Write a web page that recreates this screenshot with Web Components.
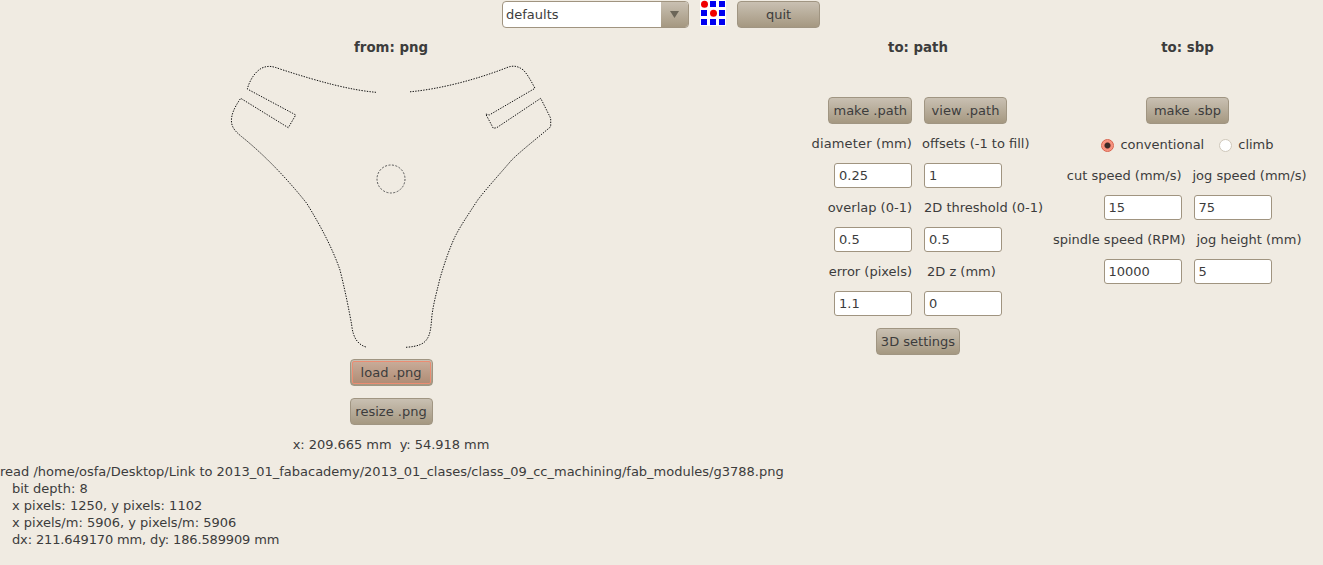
<!DOCTYPE html>
<html>
<head>
<meta charset="utf-8">
<title>fab modules</title>
<style>
html, body {
  margin: 0;
  padding: 0;
  height: 100%;
  overflow: hidden;
  background: #f0ebe2;
  color: #3c3c3c;
  font: 13px "DejaVu Sans", sans-serif;
}
</style>
</head>
<body>
<fab-app>
  <fab-toolbar slot="top">
    <fab-combo>defaults</fab-combo>
    <fab-logo></fab-logo>
    <fab-button>quit</fab-button>
  </fab-toolbar>

  <fab-panel slot="left" heading="from: png">
    <fab-outline></fab-outline>
    <fab-button focused style="margin-top:7px">load .png</fab-button>
    <fab-button style="margin-top:12px">resize .png</fab-button>
    <fab-label style="margin-top:9px;letter-spacing:-.05px">x: 209.665 mm&nbsp; y: 54.918 mm</fab-label>
  </fab-panel>

  <fab-panel slot="middle" heading="to: path">
    <fab-grid style="margin-top:40px">
      <fab-button>make .path</fab-button>
      <fab-button>view .path</fab-button>
      <fab-label style="letter-spacing:.15px">diameter (mm)</fab-label>
      <fab-label class="outset">offsets (-1 to fill)</fab-label>
      <fab-entry>0.25</fab-entry>
      <fab-entry>1</fab-entry>
      <fab-label>overlap (0-1)</fab-label>
      <fab-label>2D threshold (0-1)</fab-label>
      <fab-entry>0.5</fab-entry>
      <fab-entry>0.5</fab-entry>
      <fab-label>error (pixels)</fab-label>
      <fab-label class="inset">2D z (mm)</fab-label>
      <fab-entry>1.1</fab-entry>
      <fab-entry>0</fab-entry>
    </fab-grid>
    <fab-button style="margin-top:3px">3D settings</fab-button>
  </fab-panel>

  <fab-panel slot="right" heading="to: sbp" style="padding-left:13px">
    <fab-sbp-body>
      <fab-button>make .sbp</fab-button>
      <fab-radio-row>
        <fab-radio checked>conventional</fab-radio>
        <fab-radio>climb</fab-radio>
      </fab-radio-row>
      <fab-grid>
        <fab-label>cut speed (mm/s)</fab-label>
        <fab-label class="outset-s">jog speed (mm/s)</fab-label>
        <fab-entry>15</fab-entry>
        <fab-entry>75</fab-entry>
        <fab-label class="hang">spindle speed (RPM)</fab-label>
        <fab-label class="inset">jog height (mm)</fab-label>
        <fab-entry>10000</fab-entry>
        <fab-entry>5</fab-entry>
      </fab-grid>
    </fab-sbp-body>
  </fab-panel>

  <fab-log slot="log">
    <div>read /home/osfa/Desktop/Link to 2013_01_fabacademy/2013_01_clases/class_09_cc_machining/fab_modules/g3788.png</div>
    <div class="indent">bit depth: 8</div>
    <div class="indent">x pixels: 1250, y pixels: 1102</div>
    <div class="indent">x pixels/m: 5906, y pixels/m: 5906</div>
    <div class="indent" style="letter-spacing:-.14px">dx: 211.649170 mm, dy: 186.589909 mm</div>
  </fab-log>
</fab-app>

<script>
function define(name, css, html) {
  customElements.get(name) || customElements.define(name, class extends HTMLElement {
    constructor() {
      super();
      this.attachShadow({ mode: 'open' });
      this.shadowRoot.innerHTML = `<style>${css}</style>${html}`;
    }
  });
}

define('fab-app', `
  :host { display: block; }
  .cols {
    display: grid;
    grid-template-columns: 782px 248px 254px;
    column-gap: 12px;
    height: 426px;
    padding-top: 9px;
  }
`, `
  <slot name="top"></slot>
  <div class="cols">
    <slot name="left"></slot>
    <slot name="middle"></slot>
    <slot name="right"></slot>
  </div>
  <slot name="log"></slot>
`);

define('fab-toolbar', `
  :host {
    display: flex;
    justify-content: center;
    height: 28px;
    padding-right: 1px;
    gap: 11px;
  }
  ::slotted(fab-button) { margin: 1px 0 0 -1px; }
`, `<slot></slot>`);

define('fab-combo', `
  :host {
    display: flex;
    box-sizing: border-box;
    width: 187px;
    height: 27px;
    margin-top: 1px;
    border: 1px solid #a09480;
    border-radius: 4px;
    background: #fff;
    overflow: hidden;
  }
  .text { flex: 1; padding-left: 3px; line-height: 25px; }
  .arrow {
    width: 27px;
    display: flex;
    align-items: center;
    justify-content: center;
    background: linear-gradient(#c9c0b2, #a59881);
  }
`, `
  <div class="text"><slot></slot></div>
  <div class="arrow">
    <svg width="9" height="9" viewBox="0 0 9 9"><path d="M0 1h9L4.5 8z" fill="#6b6558"/></svg>
  </div>
`);

define('fab-logo', `
  :host { display: block; width: 27px; height: 27px; }
  svg { display: block; }
`, `
  <svg width="27" height="27" viewBox="0 0 27 27">
    <rect width="26" height="26" fill="#fff"/>
    <g fill="#0000f0">
      <rect x="10" y="1" width="6" height="6"/>
      <rect x="19" y="1" width="6" height="6"/>
      <rect x="1" y="10" width="6" height="6"/>
      <rect x="19" y="10" width="6" height="6"/>
      <rect x="1" y="19" width="6" height="6"/>
      <rect x="10" y="19" width="6" height="6"/>
      <rect x="19" y="19" width="6" height="6"/>
    </g>
    <g fill="#f00000">
      <circle cx="4.5" cy="4.2" r="3.5"/>
      <circle cx="13.5" cy="13.2" r="3.5"/>
    </g>
  </svg>
`);

define('fab-button', `
  :host {
    display: inline-flex;
    position: relative;
    isolation: isolate;
    box-sizing: border-box;
    align-items: center;
    justify-content: center;
    min-width: 83px;
    height: 27px;
    padding: 0 4px;
    border: 1px solid #a09582;
    border-radius: 4px;
    background: linear-gradient(#c9c0b2, #a59881);
    white-space: nowrap;
  }
  :host([focused])::after {
    content: "";
    position: absolute;
    inset: 1px;
    z-index: -1;
    border: 1px solid #ec8c72;
    border-radius: 2px;
    background: linear-gradient(#c8ab98, #b08d76);
  }
`, `<slot></slot>`);

define('fab-panel', `
  :host { display: block; }
  .body { display: flex; flex-direction: column; align-items: center; }
  h2 {
    margin: 0;
    height: 20px;
    font-size: 13.33px;
    font-weight: bold;
    line-height: 22px;
    text-align: center;
  }
`, `
  <h2></h2>
  <div class="body"><slot></slot></div>
`);
document.querySelectorAll('fab-panel').forEach(($el) => {
  $el.shadowRoot.querySelector('h2').textContent = $el.getAttribute('heading');
});

define('fab-label', `
  :host {
    display: block;
    height: 20px;
    line-height: 22px;
    white-space: nowrap;
  }
`, `<slot></slot>`);

define('fab-entry', `
  :host {
    display: block;
    box-sizing: border-box;
    width: 78px;
    height: 25px;
    padding-left: 4px;
    line-height: 23px;
    border: 1px solid #a09480;
    border-radius: 3px;
    background: #fff;
  }
`, `<slot></slot>`);

define('fab-grid', `
  :host {
    display: grid;
    grid-template-columns: 78px 78px;
    column-gap: 12px;
  }
  ::slotted(:nth-child(odd)) { justify-self: end; }
  ::slotted(:nth-child(even)) { justify-self: start; }
  ::slotted(fab-button) { margin-bottom: 9px; }
  ::slotted(fab-label) { margin-bottom: 10px; }
  ::slotted(fab-entry) { margin-bottom: 9px; }
  ::slotted(.inset) { padding-left: 3px; }
  ::slotted(.outset) { margin-left: -2px; }
  ::slotted(.outset-s) { margin-left: -1px; }
  ::slotted(.hang) { margin-right: -4px; }
`, `<slot></slot>`);

define('fab-sbp-body', `
  :host {
    display: flex;
    flex-direction: column;
    align-items: center;
    padding-top: 40px;
  }
`, `<slot></slot>`);

define('fab-radio-row', `
  :host {
    display: flex;
    gap: 15px;
    height: 20px;
    margin: 11px 0 10px;
  }
`, `<slot></slot>`);

define('fab-radio', `
  :host {
    display: inline-flex;
    align-items: center;
    gap: 6px;
    white-space: nowrap;
    line-height: 20px;
  }
  .dot {
    box-sizing: border-box;
    width: 13px;
    height: 13px;
    border-radius: 50%;
    border: 1px solid #cfc8bb;
    background: #fff;
  }
  :host([checked]) .dot {
    border-color: #d9604a;
    background: radial-gradient(circle, #3c2a26 0 2.5px, #f88a76 3.5px, #f5b0a0 100%);
  }
`, `<span class="dot"></span><slot></slot>`);

define('fab-outline', `
  :host { display: block; width: 322px; height: 290px; margin-top: 5px; }
  svg { display: block; }
  path, circle { fill: none; stroke: #111; stroke-width: 1; stroke-dasharray: 1.4 1.3; }
  circle { stroke: #555; stroke-dasharray: 2 1.5; }
`, `
  <svg width="322" height="290" viewBox="230 62 322 290">
    <path d="M376 92.3C350 90 320 82 280 69C272 66 268 65.5 262 68C256 71 250 79 247.3 89L292.7 113.3L295.7 115L288.3 127.7L286.7 126.7L240.7 98.3C234 108 231 115 231.5 122C232 128 236 132 241.7 136.7C262 153 285 176 306.7 203.3C322 228 333 250 340 270C345 290 349 310 351.7 325C353 338 358 345 367 347.3"/>
    <path d="M410 91.8C440 89 475 80 506.7 67.7C513 65 518 66 523.3 70C528 75 531 81 535 88.3L489.3 115L485.7 114L493.3 128.3L496.7 127.7L540.7 98.3L550.7 118.3L550.7 126.7C535 140 522 150 511.7 160C498 176 487 188 477.7 200C468 215 461 225 455 236.7C448 252 444 265 440 278.3C436 295 433 305 431.7 318C431 328 430 335 427 339C424 344 418 346.5 406 347.3"/>
    <circle cx="391" cy="179" r="14"/>
  </svg>
`);

define('fab-log', `
  :host { display: block; line-height: 17px; white-space: nowrap; }
  ::slotted(.indent) { padding-left: 12px; }
`, `<slot></slot>`);
</script>
</body>
</html>
